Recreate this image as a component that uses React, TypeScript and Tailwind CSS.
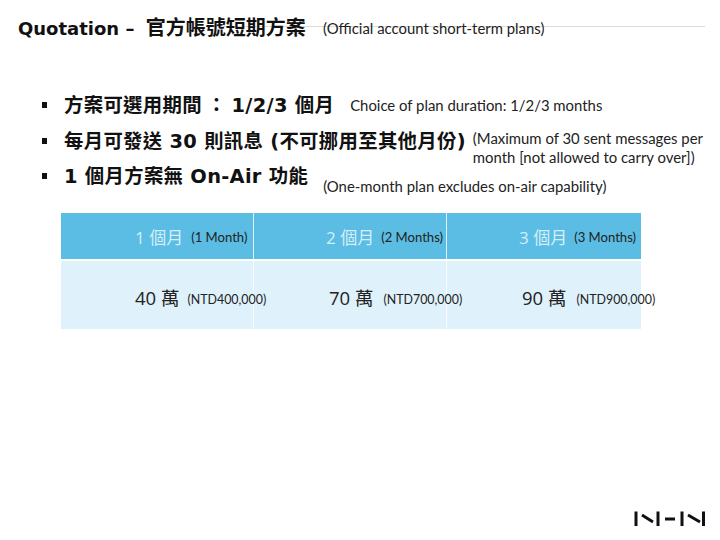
const latin = "font-['DejaVu_Sans','Noto_Sans_CJK_TC',sans-serif]";
const note = "font-['Lato','Noto_Sans',sans-serif] font-normal text-[#222]";

function Bullet({ children, note: n, noteClass }: { children: React.ReactNode; note: React.ReactNode; noteClass: string }) {
  return (
    <div className="flex items-start h-[35.5px]">
      <div className="w-[5px] h-[6px] bg-[#111] mt-[8px] mr-[17px] shrink-0" />
      <div className={`${latin} font-bold text-[19.4px] leading-[24px] text-[#111] whitespace-nowrap tracking-[0.3px]`}>{children}</div>
      <div className={`${note} text-[14.9px] leading-[19px] whitespace-nowrap ${noteClass}`}>{n}</div>
    </div>
  );
}

function Cell({ main, sub, header, mainClass, subClass, last }: { main: string; sub: string; header?: boolean; mainClass: string; subClass: string; last?: boolean }) {
  return (
    <div className={`flex items-center min-w-0 whitespace-nowrap ${last ? "" : "border-r border-white/80"} ${header ? "bg-[#5bbde3] pt-[3px]" : "bg-[#dff1fa] pt-[5px]"}`}>
      <span className={`font-['Open_Sans','Noto_Sans_CJK_TC',sans-serif] ${header ? "text-[17px] text-[#d4eef9]" : "text-[18.5px] text-[#222]"} ${mainClass}`}>{main}</span>
      <span className={`${note} relative z-10 ${header ? "text-[13.1px]" : "text-[12.4px] top-[2.5px]"} ${subClass}`}>{sub}</span>
    </div>
  );
}

export default function App() {
  return (
    <div className="relative w-[720px] h-[540px] bg-white overflow-hidden">
      <div className="absolute left-[206px] top-[26px] w-[499px] h-px bg-[#dcdcdc]" />
      <header className="relative flex items-center pl-[18px] pt-[16px] h-[41px]">
        <h1 className={`${latin} font-bold text-[20px] leading-[25px] text-[#111] whitespace-nowrap w-[305px]`}>
          <span className="text-[18px]">Quotation – </span><span className="ml-[5px]">官方帳號短期方案</span>
        </h1>
        <span className={`${note} text-[14.9px] -mt-[1px]`}>(Official account short-term plans)</span>
      </header>

      <section className="pl-[42px] pt-[53px]">
        <Bullet note="Choice of plan duration: 1/2/3 months" noteClass="ml-[16px] mt-[2px]">方案可選用期間<span className="mx-[5px]">：</span>1/2/3 個月</Bullet>
        <Bullet note={<>(Maximum of 30 sent messages per<br />month [not allowed to carry over])</>} noteClass="ml-[7px] -mt-[1px]">每月可發送 30 則訊息 (不可挪用至其他月份)</Bullet>
        <Bullet note="(One-month plan excludes on-air capability)" noteClass="ml-[15px] mt-[12px]">1 個月方案無 On-Air 功能</Bullet>
      </section>

      <section className="ml-[61px] mt-[12.5px] w-[580px] grid grid-cols-[193px_193px_194px] grid-rows-[46px_68px] gap-y-[2px]">
        <Cell header main="1 個月" sub="(1 Month)" mainClass="ml-[74px]" subClass="ml-[8px]" />
        <Cell header main="2 個月" sub="(2 Months)" mainClass="ml-[72px]" subClass="ml-[7px]" />
        <Cell header last main="3 個月" sub="(3 Months)" mainClass="ml-[72px]" subClass="ml-[7px]" />
        <Cell main="40 萬" sub="(NTD400,000)" mainClass="ml-[74px]" subClass="ml-[8px]" />
        <Cell main="70 萬" sub="(NTD700,000)" mainClass="ml-[75px]" subClass="ml-[10px]" />
        <Cell last main="90 萬" sub="(NTD900,000)" mainClass="ml-[75px]" subClass="ml-[10px]" />
      </section>

      <svg className="absolute left-[634px] top-[510px]" width="74" height="17" viewBox="0 0 74 17" fill="none" stroke="#111" strokeWidth="3" aria-label="NHN">
        <path d="M2 1.500V16M8 5L19 12M24 1.500V16M31 9H41M48 1.500V16M54 5L66 12M69.500 1.500V16" />
      </svg>
    </div>
  );
}
